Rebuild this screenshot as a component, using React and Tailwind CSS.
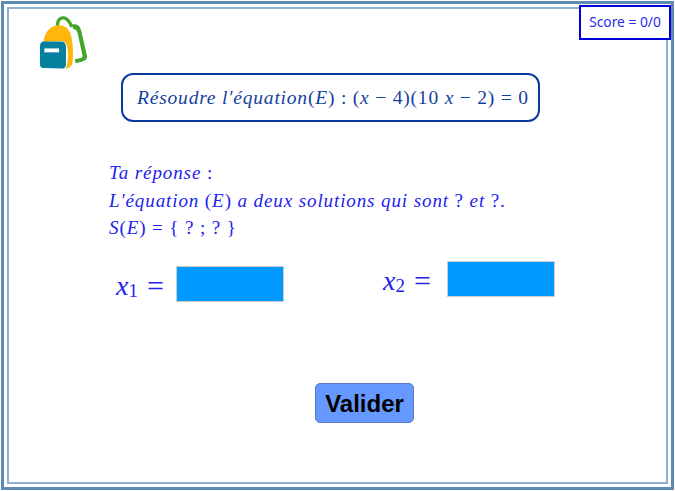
const serif = "font-['Liberation_Serif','Times_New_Roman',serif]";

function Backpack() {
  return (
    <svg width="50" height="55" viewBox="0 0 50 56" className="block">
      <path d="M18.5 10 C18 3.5 21.5 1.5 25 2 C29 2.5 31 6.5 33 11" fill="none" stroke="#43a52a" strokeWidth="3.4" />
      <path d="M33 9 C38 7.5 41 9.5 42.5 15 L48.5 41 C49 45 45 46.5 37 48 L36 44 C40 43.5 43.5 43 44 41 L39 18 C38 14 36.5 13 34.5 13.5 Z" fill="#43a52a" />
      <path d="M4 27 C5 17 11 10 19 9.5 C26 9 30 13 32 19 C34 27 35 40 33.5 48 C33 51 30 53 27 53.5 C29 48 29.5 38 28.5 32 C27.5 27 25 25.5 21 25.5 L4 26.5 Z" fill="#ffb60a" />
      <path d="M4.5 26 L22 26 C25 26 27 28 27 31 L27 49 C27 52 25.5 53.5 23 53.5 L6 53 C2 53 0.5 52 0.5 49 L0.5 31 C0.5 28 2 26 4.5 26 Z" fill="#04819f" />
      <rect x="5" y="33" width="15" height="4" fill="#ffffff" />
    </svg>
  );
}

const I = ({ children }) => <i className="italic">{children}</i>;

export default function App() {
  return (
    <div className="w-[675px] h-[491px] bg-white relative overflow-hidden">
      <div className="absolute right-[4px] top-[5px] w-[92px] h-[35px] border-2 border-[#0000dd] bg-white z-10 flex items-center justify-center text-[13.8px] text-[#2a2aee] font-['Noto_Sans',sans-serif]">
        Score = 0/0
      </div>

      <div className="w-full h-full p-px">
        <div className="w-full h-full border-[3px] border-[#5f8ab2] p-[3px]">
          <div className="w-full h-full border-2 border-[#8fb0d0] flex flex-col">
            <div className="ml-[30px] mt-[7px] h-[56px]">
              <Backpack />
            </div>

            <div className={`${serif} ml-[112px] mt-px w-[419px] h-[49px] border-2 border-[#0b3a9e] rounded-[12px] flex items-center pl-[14px] text-[19.5px] text-[#14409f] whitespace-nowrap`}>
              <span className="tracking-[0.8px]"><I>Résoudre l′équation</I>(<I>E</I>) : (<I>x</I> − 4)(10 <I>x</I> − 2) = 0</span>
            </div>

            <div className={`${serif} ml-[100px] mt-[37px] text-[19px] leading-[27.5px] text-[#2222ee] whitespace-nowrap tracking-[0.9px]`}>
              <div><I>Ta réponse</I> :</div>
              <div><I>L′équation</I> (<I>E</I>) <I>a deux solutions qui sont</I> ? <I>et</I> ?.</div>
              <div><I>S</I>(<I>E</I>) = {"{"} ? ; ? {"}"}</div>
            </div>

            <div className={`${serif} mt-[19px] flex items-start text-[#2222ee] text-[28px]`}>
              <div className="ml-[107px] mt-[5px] flex items-start">
                <div className="w-[60px] h-[36px] flex items-center pt-[4px] leading-none">
                  <I>x</I><span className="text-[19px] mt-[10px]">1</span>
                  <span className="ml-[9px] text-[30px]">=</span>
                </div>
                <div className="w-[108px] h-[36px] bg-[#0099ff] border border-[#cccccc]" />
              </div>
              <div className="ml-[99px] flex items-start">
                <div className="w-[64px] h-[36px] flex items-center pt-[4px] leading-none">
                  <I>x</I><span className="text-[19px] mt-[10px]">2</span>
                  <span className="ml-[9px] text-[30px]">=</span>
                </div>
                <div className="w-[108px] h-[36px] bg-[#0099ff] border border-[#cccccc]" />
              </div>
            </div>

            <button className="ml-[306px] mt-[81px] w-[99px] h-[40px] pt-[2px] rounded-[5px] bg-[#6699ff] border border-[#5a78c8] text-black font-bold text-[24px] font-['Liberation_Sans',Arial,sans-serif] flex items-center justify-center">
              Valider
            </button>
          </div>
        </div>
      </div>
    </div>
  );
}
